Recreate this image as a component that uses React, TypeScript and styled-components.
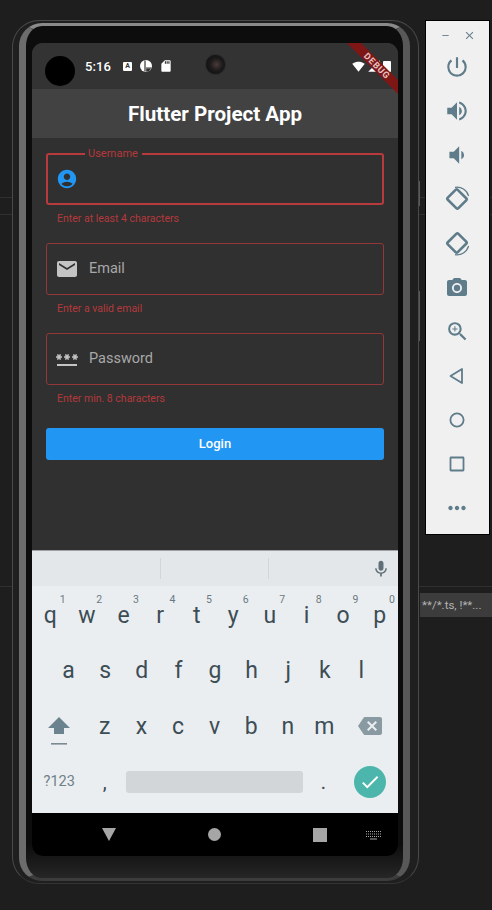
import styled, { createGlobalStyle } from 'styled-components';
import type { ComponentType, ReactNode } from 'react';
import {
  MdAccountCircle,
  MdBackspace,
  MdCameraAlt,
  MdCheck,
  MdClose,
  MdEmail,
  MdMic,
  MdMoreHoriz,
  MdPassword,
  MdPowerSettingsNew,
  MdRemove,
  MdSdCard,
  MdSignalCellular4Bar,
  MdSignalWifi4Bar,
  MdVolumeDown,
  MdVolumeUp,
  MdZoomIn,
} from 'react-icons/md';

const GlobalStyle = createGlobalStyle`
  html, body {
    margin: 0;
    padding: 0;
    background: #1e1e1e;
  }
  * {
    box-sizing: border-box;
  }
`;

const FIELD_RED = '#b5393c';

type FieldData = {
  placeholder: string;
  error: string;
  icon: ComponentType<{ size?: number }>;
  focused?: boolean;
};

const fields: FieldData[] = [
  { placeholder: 'Username', error: 'Enter at least 4 characters', icon: MdAccountCircle, focused: true },
  { placeholder: 'Email', error: 'Enter a valid email', icon: MdEmail },
  { placeholder: 'Password', error: 'Enter min. 8 characters', icon: MdPassword },
];

const rowOne = [
  ['q', '1'], ['w', '2'], ['e', '3'], ['r', '4'], ['t', '5'],
  ['y', '6'], ['u', '7'], ['i', '8'], ['o', '9'], ['p', '0'],
];
const rowTwo = ['a', 's', 'd', 'f', 'g', 'h', 'j', 'k', 'l'];
const rowThree = ['z', 'x', 'c', 'v', 'b', 'n', 'm'];

const RotateIcon = ({ flip }: { flip?: boolean }) => (
  <svg width="28" height="28" viewBox="0 0 28 28" fill="none" stroke="#5f7c8a">
    <g transform={flip ? 'translate(0 28) scale(1 -1)' : undefined}>
      <rect x="6.5" y="7" width="15" height="14" rx="1.5" strokeWidth="2.6" transform="rotate(45 14 14)" />
      <path d="M12 2.4 A12 12 0 0 1 25.6 11" strokeWidth="1.2" />
    </g>
  </svg>
);

const ShiftIcon = () => (
  <svg width="22" height="30" viewBox="0 0 22 30" fill="#6b838e">
    <path d="M11 1 L22 12 H16 V18 H6 V12 H0 Z" />
    <rect x="3" y="27" width="16" height="1.6" fill="#7b8b93" />
  </svg>
);

const NoticeCircleIcon = () => (
  <svg width="12" height="12" viewBox="0 0 12 12">
    <circle cx="6" cy="6" r="6" fill="#fff" />
    <path d="M5 0.5 V11.5 M6 8 H11.5" stroke="#333" strokeWidth="1.2" fill="none" />
    <path d="M6.2 8.4 H11 L9 11.4 L6.2 11.8 Z" fill="#333" />
  </svg>
);

const KeyboardSwitchIcon = () => (
  <svg width="15" height="10" viewBox="0 0 15 10" fill="none" stroke="#a6a6a6" strokeWidth="1">
    <path d="M0 1.5 H15 M0 4 H15 M0 6.5 H15" strokeDasharray="1 1" />
    <path d="M4 9 H11" />
  </svg>
);

const PanelButton = ({ children }: { children: ReactNode }) => <PanelSlot>{children}</PanelSlot>;

const App = () => {
  return (
    <Desktop>
      <GlobalStyle />
      <EditorLine $top={197} />
      <EditorLine $top={214} />
      <EditorLine $top={586} />
      <SearchStrip>**/*.ts, !**...</SearchStrip>
      <Phone>
        <SideButton $top={160} $height={25} />
        <SideButton $top={270} $height={50} />
        <Bezel>
          <Screen>
            <StatusBar>
              <Punch />
              <Clock>5:16</Clock>
              <NoticeIcons>
                <BadgeA>A</BadgeA>
                <NoticeCircleIcon />
                <MdSdCard size={14} />
              </NoticeIcons>
              <Camera />
              <SystemIcons>
                <MdSignalWifi4Bar size={13} />
                <MdSignalCellular4Bar size={14} />
                <BatteryTip />
              </SystemIcons>
              <DebugRibbon>DEBUG</DebugRibbon>
            </StatusBar>
            <AppBar>Flutter Project App</AppBar>
            <Body>
              {fields.map(field => (
                <FieldGroup key={field.placeholder}>
                  <FieldBox $focused={field.focused}>
                    {field.focused && <FloatingLabel>{field.placeholder}</FloatingLabel>}
                    <FieldIcon $focused={field.focused}>
                      <field.icon size={field.focused ? 22 : 24} />
                    </FieldIcon>
                    {!field.focused && <Placeholder>{field.placeholder}</Placeholder>}
                  </FieldBox>
                  <ErrorText>{field.error}</ErrorText>
                </FieldGroup>
              ))}
              <LoginButton>Login</LoginButton>
            </Body>
            <Keyboard>
              <SuggestionStrip>
                <Suggestion />
                <Suggestion $divided />
                <Suggestion $divided>
                  <MicWrap><MdMic size={20} /></MicWrap>
                </Suggestion>
              </SuggestionStrip>
              <KeyRows>
                <KeyRow>
                  {rowOne.map(([letter, hint]) => (
                    <Key key={letter}>
                      <Hint>{hint}</Hint>
                      {letter}
                    </Key>
                  ))}
                </KeyRow>
                <KeyRow $inset>
                  {rowTwo.map(letter => <Key key={letter}>{letter}</Key>)}
                </KeyRow>
                <KeyRow>
                  <WideKey><ShiftWrap><ShiftIcon /></ShiftWrap></WideKey>
                  {rowThree.map(letter => <Key key={letter}>{letter}</Key>)}
                  <WideKey $grow $color="#8a9aa2"><MdBackspace size={24} /></WideKey>
                </KeyRow>
                <KeyRow>
                  <WideKey $small>?123</WideKey>
                  <Key $punct>,</Key>
                  <SpaceKey><SpaceBar /></SpaceKey>
                  <Key $punct>.</Key>
                  <WideKey $grow><DoneKey><MdCheck size={22} /></DoneKey></WideKey>
                </KeyRow>
              </KeyRows>
            </Keyboard>
            <NavBar>
              <BackTriangle />
              <HomeDot />
              <RecentSquare />
              <KeyboardSwitch><KeyboardSwitchIcon /></KeyboardSwitch>
            </NavBar>
          </Screen>
        </Bezel>
      </Phone>
      <ToolPanel>
        <WindowControls>
          <MdRemove size={11} />
          <MdClose size={13} />
        </WindowControls>
        <PanelButton><MdPowerSettingsNew size={26} /></PanelButton>
        <PanelButton><MdVolumeUp size={26} /></PanelButton>
        <PanelButton><MdVolumeDown size={26} /></PanelButton>
        <PanelButton><RotateIcon /></PanelButton>
        <PanelButton><RotateIcon flip /></PanelButton>
        <PanelButton><MdCameraAlt size={24} /></PanelButton>
        <PanelButton><MdZoomIn size={25} /></PanelButton>
        <PanelButton>
          <svg width="24" height="24" viewBox="0 0 24 24" fill="none" stroke="#5f7c8a" strokeWidth="1.8">
            <path d="M17 5 V19 L5.5 12 Z" strokeLinejoin="round" />
          </svg>
        </PanelButton>
        <PanelButton>
          <svg width="24" height="24" viewBox="0 0 24 24" fill="none" stroke="#5f7c8a" strokeWidth="1.8">
            <circle cx="12" cy="12" r="6.6" />
          </svg>
        </PanelButton>
        <PanelButton>
          <svg width="24" height="24" viewBox="0 0 24 24" fill="none" stroke="#5f7c8a" strokeWidth="1.8">
            <rect x="5.5" y="5.5" width="13" height="13" rx="0.5" />
          </svg>
        </PanelButton>
        <PanelButton><MdMoreHoriz size={26} /></PanelButton>
      </ToolPanel>
    </Desktop>
  );
};

const Desktop = styled.div`
  position: relative;
  width: 492px;
  height: 910px;
  overflow: hidden;
  background: #1e1e1e;
  display: flex;
  align-items: flex-start;
  padding: 20px 0 0 12px;
  font-family: Roboto, 'Liberation Sans', sans-serif;
`;

const EditorLine = styled.div<{ $top: number }>`
  position: absolute;
  left: 0;
  right: 0;
  top: ${props => props.$top}px;
  height: 1px;
  background: #303030;
`;

const SearchStrip = styled.div`
  position: absolute;
  left: 420px;
  right: 0;
  top: 593px;
  height: 24px;
  padding-left: 2px;
  background: #3c3c3c;
  color: #b4b4b4;
  font-size: 11.5px;
  line-height: 24px;
  white-space: nowrap;
`;

const Phone = styled.div`
  position: relative;
  width: 407px;
  height: 864px;
  flex-shrink: 0;
  border-radius: 27px;
  padding: 2px 8px 2px 6px;
  background: #1f1f1f;
  border: 1px solid #4a4a4a;
  border-bottom-color: #343434;
`;

const SideButton = styled.span<{ $top: number; $height: number }>`
  position: absolute;
  right: -2px;
  top: ${props => props.$top}px;
  width: 1px;
  height: ${props => props.$height}px;
  background: #5a5a5a;
`;

const Bezel = styled.div`
  height: 100%;
  border-radius: 23px;
  border-style: solid;
  border-color: #8a8a8a #585858 #3c3c3c #6c6c6c;
  border-width: 3px 7px 3px 7px;
  background: linear-gradient(180deg, #0d0d0d 0, #0d0d0d 96%, #262626 100%);
  padding: 17px 5px 22px 6px;
`;

const Screen = styled.div`
  height: 813px;
  border-radius: 11px;
  overflow: hidden;
  background: #303030;
  display: flex;
  flex-direction: column;
`;

const StatusBar = styled.div`
  position: relative;
  height: 46px;
  flex-shrink: 0;
  background: #333;
  display: flex;
  align-items: center;
  padding-left: 13px;
  color: #fff;
`;

const Punch = styled.div`
  width: 30px;
  height: 30px;
  margin-top: 9px;
  border-radius: 50%;
  background: #000;
`;

const Clock = styled.span`
  margin-left: 10px;
  font-size: 13px;
  font-weight: 500;
  letter-spacing: 0.1px;
`;

const NoticeIcons = styled.div`
  display: flex;
  align-items: center;
  gap: 7px;
  margin-left: 12px;
`;

const BadgeA = styled.span`
  width: 9px;
  height: 9px;
  margin-right: 1px;
  border-radius: 1px;
  background: #fff;
  color: #333;
  font-size: 7px;
  font-weight: 700;
  line-height: 9px;
  text-align: center;
`;

const Camera = styled.div`
  position: absolute;
  left: 173px;
  top: 11px;
  width: 21px;
  height: 21px;
  border-radius: 50%;
  background: radial-gradient(circle at 55% 50%, #4a3a3a 0, #1c1a1a 45%, #0c0c0c 100%);
  border: 1px solid #2a2a2a;
`;

const SystemIcons = styled.div`
  position: absolute;
  right: 7px;
  top: 16px;
  display: flex;
  align-items: center;
  gap: 2px;
`;

const BatteryTip = styled.span`
  width: 8px;
  height: 11px;
  border-radius: 1px;
  background: #fff;
`;

const DebugRibbon = styled.div`
  position: absolute;
  right: -25px;
  top: 18px;
  width: 92px;
  height: 10px;
  transform: rotate(45deg);
  background: #7f1616;
  color: #e6c4c4;
  font-size: 9px;
  font-weight: 700;
  line-height: 10px;
  text-align: center;
  letter-spacing: 0.8px;
  z-index: 2;
`;

const AppBar = styled.header`
  height: 49px;
  flex-shrink: 0;
  background: #424242;
  color: #fff;
  font-size: 20.6px;
  font-weight: 700;
  display: flex;
  align-items: center;
  justify-content: center;
`;

const Body = styled.main`
  height: 412px;
  flex-shrink: 0;
  padding: 15px 14px 0;
  display: flex;
  flex-direction: column;
`;

const FieldGroup = styled.div`
  height: 90px;
`;

const FieldBox = styled.div<{ $focused?: boolean }>`
  position: relative;
  height: 52px;
  border-radius: 3px;
  border: ${props => (props.$focused ? '2px' : '1px')} solid ${props => (props.$focused ? '#b93a3d' : '#93373a')};
  display: flex;
  align-items: center;
  padding-left: ${props => (props.$focused ? '8px' : '8px')};
`;

const FloatingLabel = styled.span`
  position: absolute;
  left: 37px;
  top: -8px;
  padding: 0 4px 0 3px;
  background: #303030;
  color: ${FIELD_RED};
  font-size: 11px;
  line-height: 14px;
`;

const FieldIcon = styled.span<{ $focused?: boolean }>`
  display: flex;
  color: ${props => (props.$focused ? '#2196f3' : '#c4c4c4')};
`;

const Placeholder = styled.span`
  margin-left: 10px;
  padding-bottom: 2px;
  color: #a8a8a8;
  font-size: 14.5px;
`;

const ErrorText = styled.div`
  margin: 7px 0 0 11px;
  color: ${FIELD_RED};
  font-size: 10.5px;
  line-height: 13px;
`;

const LoginButton = styled.button`
  height: 32px;
  width: 100%;
  margin-top: 5px;
  padding: 0 0 2px;
  border: none;
  border-radius: 3px;
  background: #2196f3;
  color: #fff;
  font-family: inherit;
  font-size: 13px;
  font-weight: 500;
`;

const Keyboard = styled.section`
  height: 263px;
  flex-shrink: 0;
  background: #eaeef1;
  border-top: 1px solid #9ea2a4;
  display: flex;
  flex-direction: column;
`;

const SuggestionStrip = styled.div`
  height: 35px;
  flex-shrink: 0;
  background: #e4e7e9;
  display: grid;
  grid-template-columns: 127.5px 108px 1fr;
  align-items: center;
`;

const Suggestion = styled.div<{ $divided?: boolean }>`
  position: relative;
  height: 21px;
  display: flex;
  align-items: center;
  justify-content: flex-end;
  border-left: ${props => (props.$divided ? '1px solid #d2d6d8' : 'none')};
`;

const MicWrap = styled.span`
  display: flex;
  margin-right: 7px;
  color: #5f6f77;
`;

const KeyRows = styled.div`
  flex: 1;
  padding-top: 2px;
  display: grid;
  grid-template-rows: repeat(4, 55.3px);
`;

const KeyRow = styled.div<{ $inset?: boolean }>`
  display: flex;
  align-items: center;
  padding: 0 ${props => (props.$inset ? '18.3px' : '0')};
`;

const Key = styled.div<{ $punct?: boolean }>`
  position: relative;
  flex: 0 0 36.6px;
  height: 100%;
  display: flex;
  align-items: center;
  justify-content: center;
  color: #3d4d55;
  font-size: ${props => (props.$punct ? '20px' : '23px')};
  font-weight: 400;
`;

const Hint = styled.span`
  position: absolute;
  right: 3px;
  top: 5px;
  color: #6b7a82;
  font-size: 10.5px;
`;

const WideKey = styled.div<{ $small?: boolean; $color?: string; $grow?: boolean }>`
  flex: ${props => (props.$grow ? 1 : 0)} 0 54.5px;
  height: 100%;
  display: flex;
  align-items: center;
  justify-content: center;
  color: ${props => props.$color || '#6f7f87'};
  font-size: ${props => (props.$small ? '14.5px' : '20px')};
`;

const ShiftWrap = styled.span`
  display: flex;
  margin-top: 9px;
`;

const SpaceKey = styled.div`
  flex: 0 0 182px;
  padding: 0 2px 0 3px;
`;

const SpaceBar = styled.div`
  height: 22px;
  border-radius: 3px;
  background: #d2d6d9;
`;

const DoneKey = styled.span`
  width: 32px;
  height: 32px;
  border-radius: 50%;
  background: #4db6ac;
  color: #fff;
  display: flex;
  align-items: center;
  justify-content: center;
`;

const NavBar = styled.nav`
  position: relative;
  flex: 1;
  background: #000;
  display: flex;
  align-items: center;
  padding: 0 0 0 70px;
`;

const BackTriangle = styled.span`
  width: 0;
  height: 0;
  border-left: 7.5px solid transparent;
  border-right: 7.5px solid transparent;
  border-top: 13px solid #a6a6a6;
`;

const HomeDot = styled.span`
  width: 13px;
  height: 13px;
  margin-left: 92px;
  border-radius: 50%;
  background: #a6a6a6;
`;

const RecentSquare = styled.span`
  width: 14px;
  height: 14px;
  margin-left: 92px;
  background: #a6a6a6;
`;

const KeyboardSwitch = styled.span`
  display: flex;
  margin-left: 39px;
`;

const ToolPanel = styled.aside`
  position: relative;
  width: 63px;
  height: 513px;
  flex-shrink: 0;
  margin: 1px 0 0 7px;
  padding-right: 1px;
  background: #f0f0f0;
  box-shadow: 0 0 0 1px #000;
  display: flex;
  flex-direction: column;
  align-items: center;
  color: #5f7c8a;
`;

const WindowControls = styled.div`
  width: 100%;
  height: 24px;
  padding: 4px 12px 0 14px;
  display: flex;
  align-items: center;
  justify-content: space-between;
  color: #66808c;
`;

const PanelSlot = styled.div`
  width: 100%;
  height: 44.1px;
  flex-shrink: 0;
  display: flex;
  align-items: center;
  justify-content: center;
`;

export default App;
